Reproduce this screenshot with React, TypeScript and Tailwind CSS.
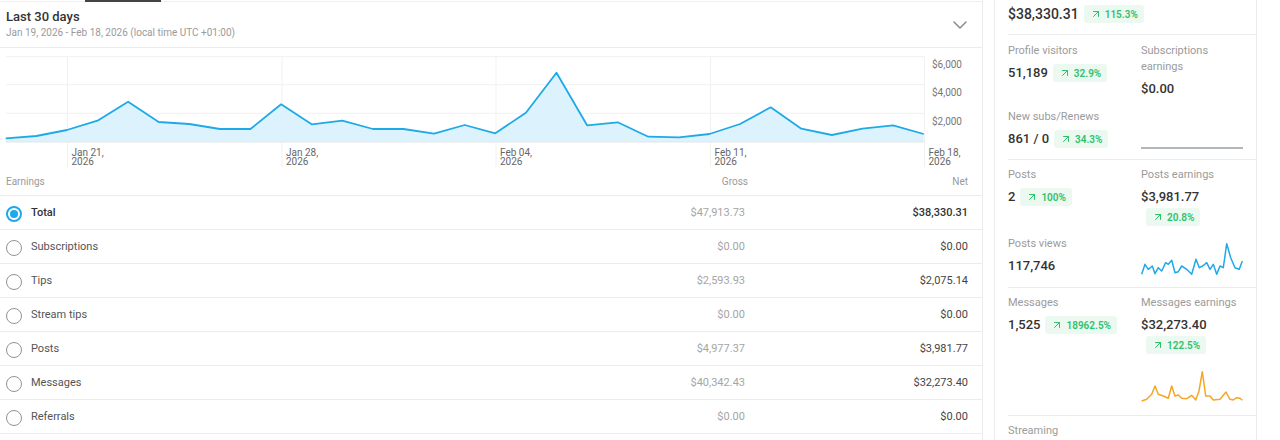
import { ArrowUpRight, ChevronDown } from "lucide-react";

const chartY = [
  90.3, 88, 82, 72.7, 53.7, 74, 76, 81, 81, 56.3, 76.3, 72.7, 81, 81, 85.7, 77,
  85.3, 64.7, 24.7, 77.3, 74.3, 88.7, 89.3, 86, 76, 59.3, 80.7, 87, 80.7, 77.3, 86,
];

const postsViews: [number, number][] = [
  [0.7, 33.3], [4, 23.3], [7.3, 28.3], [11.3, 25], [14, 32.7], [17.3, 26.7], [20.7, 30],
  [24.7, 21.7], [27.3, 23.3], [30.7, 19.3], [34, 31.7], [37.3, 30.7], [40.7, 25],
  [45.7, 28.3], [50.7, 33.3], [55, 18.3], [58.3, 26.7], [61.7, 25], [65.7, 21.7],
  [69, 28.3], [72.3, 23.3], [75.7, 33.3], [79, 25], [82.3, 26.7], [85.7, 2.7],
  [89.7, 16.7], [94, 26.7], [98.3, 28.3], [101.3, 20],
];

const messagesEarn: [number, number][] = [
  [0.7, 34], [5.7, 32.3], [10.7, 27.3], [14, 19], [17.3, 27.3], [22.3, 29], [27.3, 31.3],
  [30.7, 19], [34, 29], [37.3, 28], [40.7, 31.3], [45.7, 31.7], [50.7, 28.3], [54.7, 33],
  [58, 24], [61.3, 4.7], [64.7, 29], [69, 29], [72.3, 33], [79, 32.3], [85, 25],
  [89, 32.3], [92.3, 33], [95.7, 30.7], [99, 31.3], [101.3, 33.3],
];

const rows = [
  { name: "Total", gross: "$47,913.73", net: "$38,330.31", active: true },
  { name: "Subscriptions", gross: "$0.00", net: "$0.00" },
  { name: "Tips", gross: "$2,593.93", net: "$2,075.14" },
  { name: "Stream tips", gross: "$0.00", net: "$0.00" },
  { name: "Posts", gross: "$4,977.37", net: "$3,981.77" },
  { name: "Messages", gross: "$40,342.43", net: "$32,273.40" },
  { name: "Referrals", gross: "$0.00", net: "$0.00" },
];

const xTicks = [
  { x: 67.5, label: "Jan 21," },
  { x: 282, label: "Jan 28," },
  { x: 496, label: "Feb 04," },
  { x: 710.5, label: "Feb 11," },
  { x: 924.5, label: "Feb 18," },
];

function Badge({ value }: { value: string }) {
  return (
    <span className="ml-[5px] inline-flex h-[18px] items-center gap-[3px] rounded-[3px] bg-[#ebf9f0] px-[6px] text-[10px] font-semibold text-[#2fc16c]">
      <ArrowUpRight size={12} strokeWidth={2} />
      {value}
    </span>
  );
}

function Stat({ label, value, badge }: { label: string; value: string; badge?: string }) {
  return (
    <div>
      <div className="text-[11px] leading-4 text-[#9b9b9b]">{label}</div>
      <div className="mt-[3px] flex flex-wrap items-center">
        <span className="flex h-[22px] items-center text-[13px] font-medium text-[#333]">{value}</span>
        {badge && <Badge value={badge} />}
      </div>
    </div>
  );
}

function Spark({ pts, color, dy }: { pts: [number, number][]; color: string; dy: number }) {
  return (
    <svg width="102" height="41" viewBox="0 0 102 41">
      <polyline
        points={pts.map(([x, y]) => `${x},${y + dy}`).join(" ")}
        fill="none"
        stroke={color}
        strokeWidth="1.5"
        strokeLinejoin="round"
      />
    </svg>
  );
}

function EarningsChart() {
  const pts = chartY.map((y, i) => [5.7 + i * 30.6, y] as const);
  const line = pts.map(([x, y]) => `${x},${y}`).join(" ");
  const area = `5.7,94 ${line} ${pts[pts.length - 1][0]},94`;

  return (
    <svg width="982" height="122" viewBox="0 0 982 122" className="block">
      {[8.7, 36.7, 65.3].map((y) => (
        <line key={y} x1="6" x2="924.5" y1={y} y2={y} stroke="#f1f1f1" />
      ))}
      {xTicks.map((t) => (
        <line key={t.x} x1={t.x} x2={t.x} y1="8.7" y2="119" stroke="#f1f1f1" />
      ))}
      <polygon points={area} fill="#dcf2fc" />
      <polyline points={line} fill="none" stroke="#1fa9e8" strokeWidth="1.8" strokeLinejoin="round" />
      <line x1="6" x2="924.5" y1="94" y2="94" stroke="#e6e6e6" />
      {xTicks.map((t) => (
        <text key={t.label} x={t.x + 4} y="107.5" fontSize="10" fill="#666">
          {t.label}
          <tspan x={t.x + 4} y="116.5">2026</tspan>
        </text>
      ))}
      {[
        { y: 19.5, v: "$6,000" },
        { y: 47.5, v: "$4,000" },
        { y: 76.5, v: "$2,000" },
      ].map((l) => (
        <text key={l.v} x="962" y={l.y} fontSize="10" fill="#777" textAnchor="end">
          {l.v}
        </text>
      ))}
    </svg>
  );
}

function Radio({ on }: { on?: boolean }) {
  if (on)
    return (
      <span className="flex h-[16px] w-[16px] shrink-0 items-center justify-center rounded-full border-2 border-[#1fa9e8]">
        <span className="h-[8px] w-[8px] rounded-full bg-[#1fa9e8]" />
      </span>
    );
  return <span className="h-[16px] w-[16px] shrink-0 rounded-full border-[1.5px] border-[#929292]" />;
}

export default function App() {
  return (
    <div className="flex h-[440px] w-[1280px] overflow-hidden bg-white font-[family-name:Roboto,sans-serif]">
      <div className="w-[983px] border-r border-[#ececec]">
        <div className="flex h-[2px] border-b border-[#f0f0f0]">
          <div className="ml-[85px] h-[2px] w-[76px] bg-[#444]" />
        </div>
        <div className="flex h-[46px] items-center justify-between border-b border-[#ececec] pl-[6px] pr-[10px]">
          <div className="pb-[1px]">
            <div className="text-[13px] font-medium leading-[18px] text-[#333]">Last 30 days</div>
            <div className="text-[10px] leading-[14px] text-[#9a9a9a]">
              Jan 19, 2026 - Feb 18, 2026 (local time UTC +01:00)
            </div>
          </div>
          <ChevronDown size={24} strokeWidth={1.5} className="text-[#8a8a8a]" />
        </div>

        <EarningsChart />

        <div className="flex h-[26px] items-center border-b border-[#ececec] pb-[3px] pl-[6px] pr-[14px] text-[10px] text-[#9a9a9a]">
          <span className="flex-1">Earnings</span>
          <span className="w-[120px] text-right">Gross</span>
          <span className="w-[220px] text-right">Net</span>
        </div>

        {rows.map((r) => (
          <div key={r.name} className="flex h-[34px] items-center border-b border-[#ececec] pl-[6px] pr-[14px] pt-[2px] text-[11px]">
            <Radio on={r.active} />
            <span className={`ml-[9px] flex-1 ${r.active ? "font-medium text-[#333]" : "text-[#555]"}`}>{r.name}</span>
            <span className="w-[120px] text-right text-[#a5a5a5]">{r.gross}</span>
            <span className={`w-[223px] text-right ${r.active ? "font-medium text-[#333]" : "text-[#444]"}`}>{r.net}</span>
          </div>
        ))}
      </div>

      <div className="ml-[11px] w-[263px] border-x border-[#ececec] pl-[13px]">
        <div className="flex h-[35px] items-center border-b border-[#ececec] pb-[6px]">
          <span className="text-[14px] font-medium text-[#333]">$38,330.31</span>
          <Badge value="115.3%" />
        </div>

        <div className="grid grid-cols-[133px_1fr] gap-y-[9px] border-b border-[#ececec] pb-[9px] pr-[13px] pt-[8px]">
          <Stat label="Profile visitors" value="51,189" badge="32.9%" />
          <Stat label="Subscriptions earnings" value="$0.00" />
          <Stat label="New subs/Renews" value="861 / 0" badge="34.3%" />
          <svg width="102" height="41" viewBox="0 0 102 41">
            <line x1="0" x2="102" y1="39" y2="39" stroke="#9aa0a6" strokeWidth="1.5" />
          </svg>
        </div>

        <div className="grid grid-cols-[133px_1fr] gap-y-[10px] border-b border-[#ececec] pb-[10px] pr-[13px] pt-[7px]">
          <Stat label="Posts" value="2" badge="100%" />
          <Stat label="Posts earnings" value="$3,981.77" badge="20.8%" />
          <Stat label="Posts views" value="117,746" />
          <Spark pts={postsViews} color="#1fa9e8" dy={5} />
        </div>

        <div className="grid grid-cols-[133px_1fr] gap-y-[9px] border-b border-[#ececec] pb-[11px] pr-[13px] pt-[7px]">
          <Stat label="Messages" value="1,525" badge="18962.5%" />
          <Stat label="Messages earnings" value="$32,273.40" badge="122.5%" />
          <div />
          <Spark pts={messagesEarn} color="#f5a623" dy={4} />
        </div>

        <div className="pt-[7px] text-[11px] leading-4 text-[#9b9b9b]">Streaming</div>
      </div>
    </div>
  );
}
